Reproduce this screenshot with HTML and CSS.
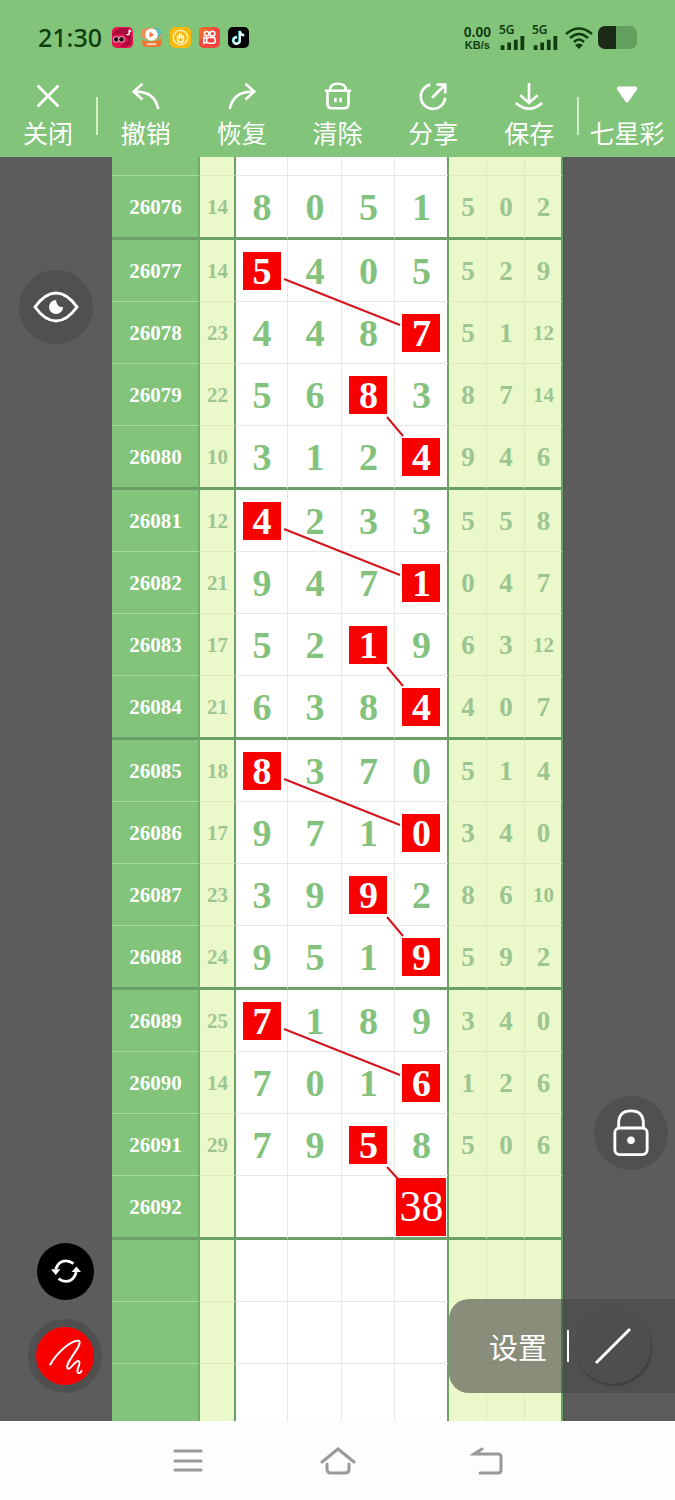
FILE: index.html
```html
<!DOCTYPE html>
<html lang="zh-CN">

<head>
  <meta charset="utf-8" />
  <meta name="viewport" content="width=device-width, initial-scale=1" />
  <title>七星彩</title>
  <link rel="stylesheet" href="styles.css">
</head>

<body>
  <header class="top">
    <div class="status">
      <span class="clock">21:30</span>
      <div class="apps">
        <svg viewBox="0 0 22 22"><rect width="22" height="22" rx="5" fill="#e3124f"/><path d="M0 9C3 2 9 1 16 1L20 5V17L14 21H8L17 14L12 7Z" fill="#a80b3a"/><circle cx="4.500" cy="13" r="3" fill="#201018" stroke="#ffc5d3"/><circle cx="10" cy="13" r="3" fill="#201018" stroke="#ffc5d3"/><path d="M18 3V8M15 8H18M18 3L20 5" stroke="#fff" stroke-width="1.5"/></svg>
        <svg viewBox="0 0 22 22"><path d="M1 3Q9-1 17 2L22 5L20 12L8 14L1 11Z" fill="#f18b55"/><path d="M14 1Q21 0 22 5L18 12Z" fill="#56c1ae"/><path d="M1 14Q14 17 21 12Q24 21 16 21H5Q1 21 1 14Z" fill="#ef7431"/><circle cx="11" cy="8" r="6.5" fill="#fff"/><path d="M9 5L14 8L9 11Z" fill="#f17443"/><path d="M6 18H16" stroke="#ffd3b4" stroke-width="2"/></svg>
        <svg viewBox="0 0 22 22"><rect width="22" height="22" rx="5" fill="#f8b90c"/><circle cx="11" cy="11" r="7.5" fill="none" stroke="#fff2b5" stroke-width="1.5"/><path d="M8 9V13Q8 16 11 16T14 13V9M10 7V12M12 7V12" fill="none" stroke="#fff8d4" stroke-width="1.7"/></svg>
        <svg viewBox="0 0 22 22"><rect width="22" height="22" rx="5" fill="#f4463f"/><path d="M0 5Q0 0 5 0H14L0 15Z" fill="#f4652f"/><g fill="none" stroke="#fff" stroke-width="1.7"><circle cx="8" cy="7" r="2.3"/><circle cx="14" cy="7" r="2.6"/><rect x="8" y="11" width="9" height="6" rx="2"/><path d="M8 12L5 11V17L8 16"/></g></svg>
        <svg viewBox="0 0 22 22"><rect width="22" height="22" rx="5" fill="#050505"/><path d="M12 4V14A3.400 3.400 0 1 1 9 10.500M12 4Q13 8 17 8.500" fill="none" stroke="#4ee" stroke-width="2.500"/><path d="M12.500 4.500V14.500A3.400 3.400 0 1 1 9.500 11M12.500 4.500Q13 8.500 17 9" fill="none" stroke="#fff" stroke-width="2"/></svg>
      </div>
      <div class="net"><span>0.00</span><small>KB/s</small></div>
      <div class="signal"><span>5G</span><svg viewBox="0 0 26 17"><path d="M3 17V12M10 17V9M17 17V6M24 17V2"/></svg></div>
      <div class="signal"><span>5G</span><svg viewBox="0 0 26 17"><path d="M3 17V12M10 17V9M17 17V6M24 17V2"/></svg></div>
      <svg class="wifi" viewBox="0 0 28 24"><path d="M1 8Q14-3 27 8M5 12Q14 4 23 12M9 16Q14 11 19 16" fill="none" stroke="#103d0e" stroke-width="2.500"/><path d="M10 19Q14 16 18 19L14 23Z" fill="#103d0e"/></svg>
      <div class="battery"></div>
    </div>

    <nav class="toolbar">
      <button class="tool">
        <svg viewBox="0 0 32 32"><path d="M4 4L28 28M28 4L4 28"/></svg>关闭
      </button>
      <span class="sep"></span>
      <button class="tool">
        <svg viewBox="0 0 32 32"><path d="M12 2L2 11L12 20M2 11Q26 10 30 31"/></svg>撤销
      </button>
      <button class="tool">
        <svg viewBox="0 0 32 32"><path d="M20 2L30 11L20 20M30 11Q6 10 2 31"/></svg>恢复
      </button>
      <button class="tool">
        <svg viewBox="0 0 32 32"><path d="M1 10H31M7 9Q7 2 16 2T25 9M4 11V25Q4 30 9 30H23Q28 30 28 25V11M13 18V23M19 18V23"/></svg>清除
      </button>
      <button class="tool">
        <svg viewBox="0 0 32 32"><path d="M13 3A14 14 0 1 0 30 18M15 18L29 4M20 3H30V13"/></svg>分享
      </button>
      <button class="tool">
        <svg viewBox="0 0 32 32"><path d="M16 1V23M6 15L16 24L26 15M1 24Q16 37 31 24"/></svg>保存
      </button>
      <span class="sep"></span>
      <button class="tool">
        <svg viewBox="0 0 32 32"><path d="M7 5H25Q29 5 27 9L18 22Q16 25 14 22L5 9Q3 5 7 5Z" class="solid"/></svg>七星彩
      </button>
    </nav>
  </header>

  <main class="board">
    <div class="chart">
      <table>
        <colgroup>
          <col class="c-id"><col class="c-sum">
          <col class="c-n1"><col class="c-n2"><col class="c-n3"><col class="c-n4">
          <col class="c-x"><col class="c-x"><col class="c-x">
        </colgroup>
        <tbody>
          <tr class="cut"><th></th><td></td><td></td><td></td><td></td><td></td><td></td><td></td><td></td></tr>
          <tr class="end"><th>26076</th><td>14</td><td>8</td><td>0</td><td>5</td><td>1</td><td>5</td><td>0</td><td>2</td></tr>

          <tr><th>26077</th><td>14</td><td><b>5</b></td><td>4</td><td>0</td><td>5</td><td>5</td><td>2</td><td>9</td></tr>
          <tr><th>26078</th><td>23</td><td>4</td><td>4</td><td>8</td><td><b>7</b></td><td>5</td><td>1</td><td class="two">12</td></tr>
          <tr><th>26079</th><td>22</td><td>5</td><td>6</td><td><b>8</b></td><td>3</td><td>8</td><td>7</td><td class="two">14</td></tr>
          <tr class="end"><th>26080</th><td>10</td><td>3</td><td>1</td><td>2</td><td><b>4</b></td><td>9</td><td>4</td><td>6</td></tr>

          <tr><th>26081</th><td>12</td><td><b>4</b></td><td>2</td><td>3</td><td>3</td><td>5</td><td>5</td><td>8</td></tr>
          <tr><th>26082</th><td>21</td><td>9</td><td>4</td><td>7</td><td><b>1</b></td><td>0</td><td>4</td><td>7</td></tr>
          <tr><th>26083</th><td>17</td><td>5</td><td>2</td><td><b>1</b></td><td>9</td><td>6</td><td>3</td><td class="two">12</td></tr>
          <tr class="end"><th>26084</th><td>21</td><td>6</td><td>3</td><td>8</td><td><b>4</b></td><td>4</td><td>0</td><td>7</td></tr>

          <tr><th>26085</th><td>18</td><td><b>8</b></td><td>3</td><td>7</td><td>0</td><td>5</td><td>1</td><td>4</td></tr>
          <tr><th>26086</th><td>17</td><td>9</td><td>7</td><td>1</td><td><b>0</b></td><td>3</td><td>4</td><td>0</td></tr>
          <tr><th>26087</th><td>23</td><td>3</td><td>9</td><td><b>9</b></td><td>2</td><td>8</td><td>6</td><td class="two">10</td></tr>
          <tr class="end"><th>26088</th><td>24</td><td>9</td><td>5</td><td>1</td><td><b>9</b></td><td>5</td><td>9</td><td>2</td></tr>

          <tr><th>26089</th><td>25</td><td><b>7</b></td><td>1</td><td>8</td><td>9</td><td>3</td><td>4</td><td>0</td></tr>
          <tr><th>26090</th><td>14</td><td>7</td><td>0</td><td>1</td><td><b>6</b></td><td>1</td><td>2</td><td>6</td></tr>
          <tr><th>26091</th><td>29</td><td>7</td><td>9</td><td><b>5</b></td><td>8</td><td>5</td><td>0</td><td>6</td></tr>
          <tr class="end"><th>26092</th><td></td><td></td><td></td><td></td><td class="guess"><span>38</span></td><td></td><td></td><td></td></tr>

          <tr><th></th><td></td><td></td><td></td><td></td><td></td><td></td><td></td><td></td></tr>
          <tr><th></th><td></td><td></td><td></td><td></td><td></td><td></td><td></td><td></td></tr>
          <tr><th></th><td></td><td></td><td></td><td></td><td></td><td></td><td></td><td></td></tr>
        </tbody>
      </table>
      <svg class="links" viewBox="0 0 450 1270" preserveAspectRatio="none">
        <path d="M172 122L288 168M275 260L291 279"/>
        <path d="M172 372L288 418M275 510L291 529"/>
        <path d="M172 622L288 668M275 760L291 779"/>
        <path d="M172 872L288 918M275 1010L286 1022"/>
      </svg>
    </div>

    <button class="float eye" aria-label="显示">
      <svg viewBox="0 0 48 34"><path d="M3 17Q13 3 24 3T45 17Q35 31 24 31T3 17Z" fill="none" stroke="#fff" stroke-width="3"/><path d="M24 10A7 7 0 1 0 31 17Q25 18 24 10Z" fill="#fff"/></svg>
    </button>
    <button class="float lock" aria-label="锁定">
      <svg viewBox="0 0 40 50"><path d="M7 20V15Q7 2 20 2T33 15V20" fill="none" stroke="#fff" stroke-width="3"/><rect x="3" y="20" width="34" height="28" rx="5" fill="none" stroke="#fff" stroke-width="3"/><circle cx="20" cy="33" r="4" fill="#fff"/></svg>
    </button>
    <button class="float turn" aria-label="切换">
      <svg viewBox="0 0 32 28"><path d="M5 12Q8 3 16 3Q20 3 24 6M27 15Q24 25 16 25Q12 25 8 22" fill="none" stroke="#fff" stroke-width="3"/><path d="M0 12H10L5 18ZM22 15H32L27 9Z" fill="#fff"/></svg>
    </button>
    <button class="float pen" aria-label="画笔">
      <svg viewBox="0 0 36 38"><path d="M2 28C9 15 25 1 32 3C36 8 17 25 20 31C22 35 29 21 32 24C34 27 28 34 31 36C33 37 34 35 35 33" fill="none" stroke="#fff" stroke-width="2"/></svg>
    </button>

    <div class="settings">
      <button class="set">设置</button>
      <span class="bar"></span>
      <button class="stroke" aria-label="直线">
        <svg viewBox="0 0 38 38"><path d="M2 36L36 2" stroke="#fff" stroke-width="3"/></svg>
      </button>
    </div>
  </main>

  <footer class="navbar">
    <button aria-label="菜单"><svg viewBox="0 0 36 30"><path d="M5 5H31M5 15H31M5 24H31"/></svg></button>
    <button aria-label="主页"><svg viewBox="0 0 36 30"><path d="M2 16L18 3L34 16M7 18V23Q7 27 11 27H25Q29 27 29 23V18"/></svg></button>
    <button aria-label="返回"><svg viewBox="0 0 36 30"><path d="M12 3L4 8H28Q31 8 31 11V24Q31 27 28 27H10"/></svg></button>
  </footer>
</body>

</html>
```

FILE: styles.css
```css
* {
  box-sizing: border-box;
}

body {
  margin: 0;
  height: 100vh;
  display: flex;
  flex-direction: column;
  background: #5c5c5c;
  font-family: "Noto Sans", "Noto Sans CJK SC", sans-serif;
}

button {
  border: 0;
  padding: 0;
  background: none;
  color: #fff;
  font-family: "Noto Sans CJK SC", sans-serif;
}

svg {
  display: block;
}

/* status bar */
.top {
  background: #82c47a;
}

.status {
  display: flex;
  align-items: center;
  height: 75px;
  padding: 0 38px;
  color: #103d0e;
}

.clock {
  padding-bottom: 2px;
  font-size: 25px;
  font-weight: 500;
}

.apps {
  display: flex;
  gap: 8px;
  margin-left: 10px;
  margin-right: auto;
}

.apps svg {
  width: 21px;
  height: 21px;
}

.net {
  display: flex;
  flex-direction: column;
  align-items: center;
  margin-right: 8px;
  font-family: "Liberation Sans", sans-serif;
  font-size: 14px;
  font-weight: bold;
  line-height: 14px;
}

.net small {
  font-size: 11px;
  line-height: 12px;
}

.signal {
  display: flex;
  flex-direction: column;
  width: 26px;
  margin-right: 7px;
  font-size: 12px;
  font-weight: 600;
  line-height: 8px;
}

.signal svg {
  width: 26px;
  height: 16px;
}

.signal path {
  stroke: #103d0e;
  stroke-width: 4;
}

.wifi {
  width: 28px;
  height: 24px;
}

.battery {
  width: 39px;
  height: 23px;
  margin-left: 5px;
  border-radius: 7px;
  background: linear-gradient(90deg, #1b2a17 46%, #639f5d 46%);
}

/* tools */
.toolbar {
  display: flex;
  align-items: center;
  height: 82px;
}

.tool {
  flex: 1 1 0;
  min-width: 0;
  display: flex;
  flex-direction: column;
  align-items: center;
  gap: 4px;
  font-size: 25px;
  line-height: 36px;
  white-space: nowrap;
}

.tool svg {
  width: 28px;
  height: 28px;
  fill: none;
  stroke: #fff;
  stroke-width: 3;
  overflow: visible;
}

.tool .solid {
  fill: #fff;
  stroke: none;
}

.sep {
  width: 2px;
  height: 38px;
  background: #d3f0cb;
}

/* chart */
.board {
  position: relative;
  flex: 1;
  min-height: 0;
  overflow: hidden;
}

.chart {
  position: relative;
  width: 66.67%;
  margin: 0 auto;
}

table {
  width: 100%;
  table-layout: fixed;
  border-collapse: separate;
  border-spacing: 0;
  box-shadow: 2px 0 #4e5c54;
  font-family: "Liberation Serif", serif;
  font-weight: bold;
}

.c-id { width: 88px; }
.c-sum { width: 36px; }
.c-n1 { width: 52px; }
.c-n2 { width: 54px; }
.c-n3 { width: 53px; }
.c-n4 { width: 54px; }
.c-x { width: 38px; }

th,
td {
  height: 62px;
  padding: 0;
  text-align: center;
  line-height: 38px;
  border-right: 1px solid #e5e8e4;
  border-bottom: 1px solid #e3e8e1;
  background: #fff;
  color: #82c27c;
  font-size: 38px;
}

th {
  background: #82c47a;
  color: #fff;
  font-size: 21px;
  border-right: 2px solid #6cae68;
  border-bottom-color: #a6d99e;
}

td:nth-child(2),
td:nth-child(n+7) {
  background: #ebf8c9;
  color: #9cc592;
  font-size: 27px;
  border-color: #dcebbb;
}

td:nth-child(2),
td.two:nth-child(9) {
  font-size: 21px;
}

td:nth-child(2),
td:nth-child(6),
td:nth-child(9) {
  border-right: 2px solid #6b9f68;
}

.cut th,
.cut td {
  height: 19px;
}

.end th,
.end td,
.end td:nth-child(n) {
  height: 64px;
  border-bottom: 3px solid #6b9f68;
}

td b {
  display: block;
  width: 38px;
  margin: 0 auto;
  background: #f80000;
  color: #fff;
}

.guess {
  padding: 1px;
}

.guess span {
  display: block;
  background: #f80000;
  color: #fff;
  font-size: 44px;
  font-weight: normal;
  line-height: 58px;
}

.links {
  position: absolute;
  top: 0;
  left: 0;
  width: 100%;
  height: 1270px;
  fill: none;
  stroke: #d4141c;
  stroke-width: 2;
  pointer-events: none;
}

/* floating buttons */
.float {
  position: absolute;
  display: flex;
  align-items: center;
  justify-content: center;
  width: 74px;
  height: 74px;
  border-radius: 50%;
  background: #505050;
}

.eye {
  left: 19px;
  top: 113px;
}

.eye svg {
  width: 48px;
}

.lock {
  right: 7px;
  bottom: 251px;
}

.lock svg {
  width: 38px;
}

.turn {
  left: 37px;
  bottom: 121px;
  width: 57px;
  height: 57px;
  background: #000;
}

.turn svg {
  width: 30px;
}

.pen {
  left: 28px;
  bottom: 28px;
  border: 8px solid #505050;
  background: #f80000;
}

.pen svg {
  width: 35px;
}

.settings {
  position: absolute;
  right: 0;
  bottom: 28px;
  display: flex;
  align-items: center;
  height: 94px;
  padding: 0 24px 0 40px;
  border-radius: 20px 0 0 20px;
  background: rgba(72, 72, 72, 0.6);
}

.set {
  font-size: 29px;
}

.bar {
  width: 2px;
  height: 32px;
  margin-left: 20px;
  margin-right: 6px;
  background: #fff;
}

.stroke {
  display: flex;
  align-items: center;
  justify-content: center;
  width: 76px;
  height: 76px;
  border-radius: 50%;
  background: #4e4e4e;
  box-shadow: 1px 2px 2px #3c3c3c;
}

.stroke svg {
  width: 38px;
}

/* system navigation */
.navbar {
  display: flex;
  align-items: center;
  justify-content: center;
  gap: 90px;
  height: 79px;
  background: #fdfdfd;
}

.navbar button {
  width: 60px;
  height: 60px;
}

.navbar svg {
  width: 36px;
  height: 30px;
  margin: 0 auto;
  fill: none;
  stroke: #999;
  stroke-width: 3;
  stroke-linecap: round;
}
```
